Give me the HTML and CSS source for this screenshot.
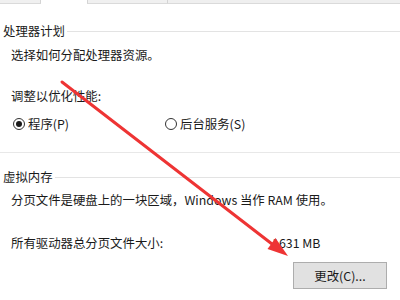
FILE: index.html
```html
<!DOCTYPE html>
<html lang="zh-CN">
<head>
<meta charset="utf-8">
<link rel="stylesheet" href="styles.css">
</head>
<body>
<div class="page">
  <div class="tabs">
    <div class="tab t1"></div>
    <div class="tab active"></div>
    <div class="tab t2"></div>
    <div class="tab-rest"></div>
  </div>

  <section class="group g1">
    <div class="legend"><span>处理器计划</span><i class="rule"></i></div>
    <p class="line l1">选择如何分配处理器资源。</p>
    <p class="line l2">调整以优化性能:</p>
    <div class="radios">
      <label class="radio r1"><span class="dot checked"></span>程序(P)</label>
      <label class="radio r2"><span class="dot"></span>后台服务(S)</label>
    </div>
  </section>

  <section class="group g2">
    <div class="legend"><span>虚拟内存</span><i class="rule"></i></div>
    <p class="line l3">分页文件是硬盘上的一块区域，Windows 当作 RAM 使用。</p>
    <div class="line size-row"><span class="size-label">所有驱动器总分页文件大小:</span><span class="size-value">1631 MB</span></div>
    <div class="btn-row"><button class="btn">更改(C)...</button></div>
  </section>

  <svg class="arrow" width="400" height="300" viewBox="0 0 400 300">
    <line x1="62" y1="82" x2="272" y2="244" stroke="#ee3434" stroke-width="3" stroke-linecap="round"/>
    <polygon points="288,256 267.5,249 275.5,238" fill="#ee3434"/>
  </svg>
</div>
</body>
</html>
```

FILE: styles.css
```css
html, body {
  margin: 0;
  padding: 0;
  background: #ffffff;
}
body {
  font-family: "Noto Sans CJK SC", "Noto Sans", sans-serif;
  font-size: 12.4px;
  color: #1a1a1a;
}
.page {
  position: relative;
  width: 400px;
  height: 300px;
  overflow: hidden;
}
.tabs {
  display: flex;
  height: 4px;
}
.tab {
  background: #f0f0f0;
  border-bottom: 1px solid #dadada;
  box-sizing: border-box;
}
.t1 {
  width: 41px;
  border-right: 1px solid #d4d4d4;
}
.active {
  width: 46px;
  background: #ffffff;
  border-bottom: none;
}
.t2 {
  width: 81px;
  border-left: 1px solid #d4d4d4;
  border-right: 1px solid #d4d4d4;
}
.tab-rest {
  flex: 1;
  background: #efefef;
  border-bottom: 1px solid #dadada;
}
.legend {
  display: flex;
  align-items: center;
  height: 16px;
  line-height: 16px;
  padding-left: 3px;
}
.legend span {
  padding-right: 2px;
}
.rule {
  flex: 1;
  height: 1px;
  background: #e3e3e3;
}
.g1 {
  margin-top: 19px;
  padding-bottom: 20px;
  border-bottom: 1px solid #e8e8e8;
}
.line {
  margin: 0;
  padding-left: 11px;
  height: 16px;
  line-height: 16px;
}
.l1 { margin-top: 8px; }
.l2 { margin-top: 25px; }
.radios {
  display: flex;
  margin-top: 12px;
  height: 16px;
  padding-left: 13px;
}
.radio {
  display: flex;
  align-items: center;
  line-height: 16px;
}
.r1 {
  width: 152px;
}
.dot {
  width: 12px;
  height: 12px;
  box-sizing: border-box;
  border: 1px solid #333333;
  border-radius: 50%;
  margin-right: 3px;
  position: relative;
}
.dot.checked::after {
  content: "";
  position: absolute;
  left: 2px;
  top: 2px;
  width: 6px;
  height: 6px;
  border-radius: 50%;
  background: #1a1a1a;
}
.g2 {
  margin-top: 16px;
}
.l3 { margin-top: 7px; }
.size-row {
  display: flex;
  margin-top: 27px;
}
.size-label {
  width: 261px;
}
.btn-row {
  display: flex;
  justify-content: flex-end;
  margin-top: 11px;
  padding-right: 13px;
}
.btn {
  width: 94px;
  height: 27px;
  background: #e1e1e1;
  border: 1px solid #adadad;
  font-family: inherit;
  font-size: 12.4px;
  color: #1a1a1a;
  padding: 0;
}
.arrow {
  position: absolute;
  left: 0;
  top: 0;
  pointer-events: none;
}
```
